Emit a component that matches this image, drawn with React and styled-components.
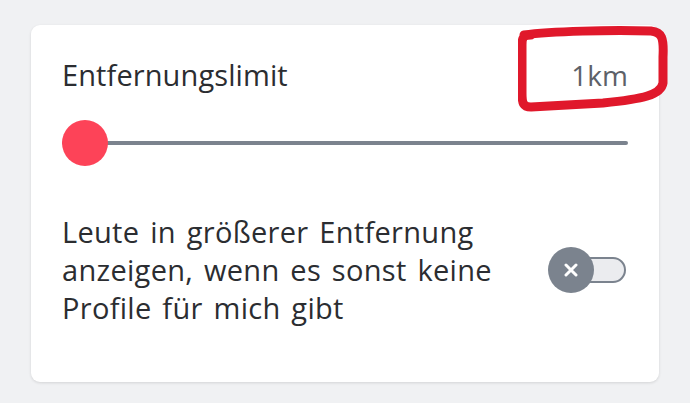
import React from 'react'
import styled, { createGlobalStyle } from 'styled-components'

const Global = createGlobalStyle`
  html, body {
    margin: 0;
    padding: 0;
    background: #f0f1f3;
    font-family: "Open Sans", "Liberation Sans", sans-serif;
  }
`

const Page = styled.div`
  width: 690px;
  height: 403px;
  box-sizing: border-box;
  padding: 25px 31px 0 31px;
`

const Card = styled.div`
  position: relative;
  height: 357px;
  box-sizing: border-box;
  background: #fff;
  border-radius: 9px;
  box-shadow: 0 1px 3px rgba(0, 0, 0, 0.12);
  padding: 30px 31px 0 31px;
  display: flex;
  flex-flow: column;
`

const Row = styled.div`
  display: flex;
  justify-content: space-between;
  align-items: center;
`

const Title = styled.span`
  font-size: 29px;
  color: #2b2d31;
  letter-spacing: 0.1px;
`

const Value = styled.span`
  font-size: 28px;
  color: #5d6168;
`

const SliderWrap = styled.div`
  position: relative;
  height: 46px;
  margin-top: 26px;
  display: flex;
  align-items: center;
`

const Track = styled.div`
  flex: 1;
  height: 4px;
  border-radius: 2px;
  background: #7b838e;
`

const Thumb = styled.div`
  position: absolute;
  left: 0;
  top: 0;
  width: 46px;
  height: 46px;
  border-radius: 50%;
  background: #fd4358;
`

const OptionRow = styled.div`
  display: flex;
  justify-content: space-between;
  align-items: center;
  margin-top: 47px;
`

const OptionText = styled.p`
  margin: 0;
  font-size: 29px;
  line-height: 38px;
  letter-spacing: 0.3px;
  word-spacing: 3px;
  color: #2b2d31;
  max-width: 470px;
`

const Toggle = styled.div`
  position: relative;
  width: 78px;
  height: 46px;
  margin-right: 2px;
  display: flex;
  align-items: center;
`

const ToggleTrack = styled.div`
  margin-left: 30px;
  width: 48px;
  height: 26px;
  box-sizing: border-box;
  border: 2px solid #7b838e;
  border-radius: 13px;
  background: #ebecef;
`

const Knob = styled.div`
  position: absolute;
  left: 0;
  top: 0;
  width: 46px;
  height: 46px;
  border-radius: 50%;
  background: #7b838e;
  display: flex;
  align-items: center;
  justify-content: center;
`

const Mark = styled.svg`
  position: absolute;
  left: 487px;
  top: 0px;
  width: 160px;
  height: 90px;
  pointer-events: none;
`

const App = () => {
  return (
    <Page>
      <Global />
      <Card>
        <Row>
          <Title>Entfernungslimit</Title>
          <Value>1km</Value>
        </Row>
        <SliderWrap>
          <Track />
          <Thumb />
        </SliderWrap>
        <OptionRow>
          <OptionText>
            Leute in größerer Entfernung anzeigen, wenn es sonst keine Profile für mich gibt
          </OptionText>
          <Toggle>
            <ToggleTrack />
            <Knob>
              <svg width="14" height="14" viewBox="0 0 14 14">
                <path d="M2 2 L12 12 M12 2 L2 12" stroke="#fff" strokeWidth="3" strokeLinecap="round" />
              </svg>
            </Knob>
          </Toggle>
        </OptionRow>
        <Mark viewBox="487 0 160 90">
          <path
            d="M493,10 C520,6 580,5 620,6 C631,7 633,13 632,32 L632,58 C630,70 612,74 572,78 L500,82 C492,82 491,78 491,68 L491,20 C491,13 492,10 500,10"
            fill="none"
            stroke="#e0182b"
            strokeWidth="9"
            strokeLinecap="round"
            strokeLinejoin="round"
          />
        </Mark>
      </Card>
    </Page>
  )
}

export default App
